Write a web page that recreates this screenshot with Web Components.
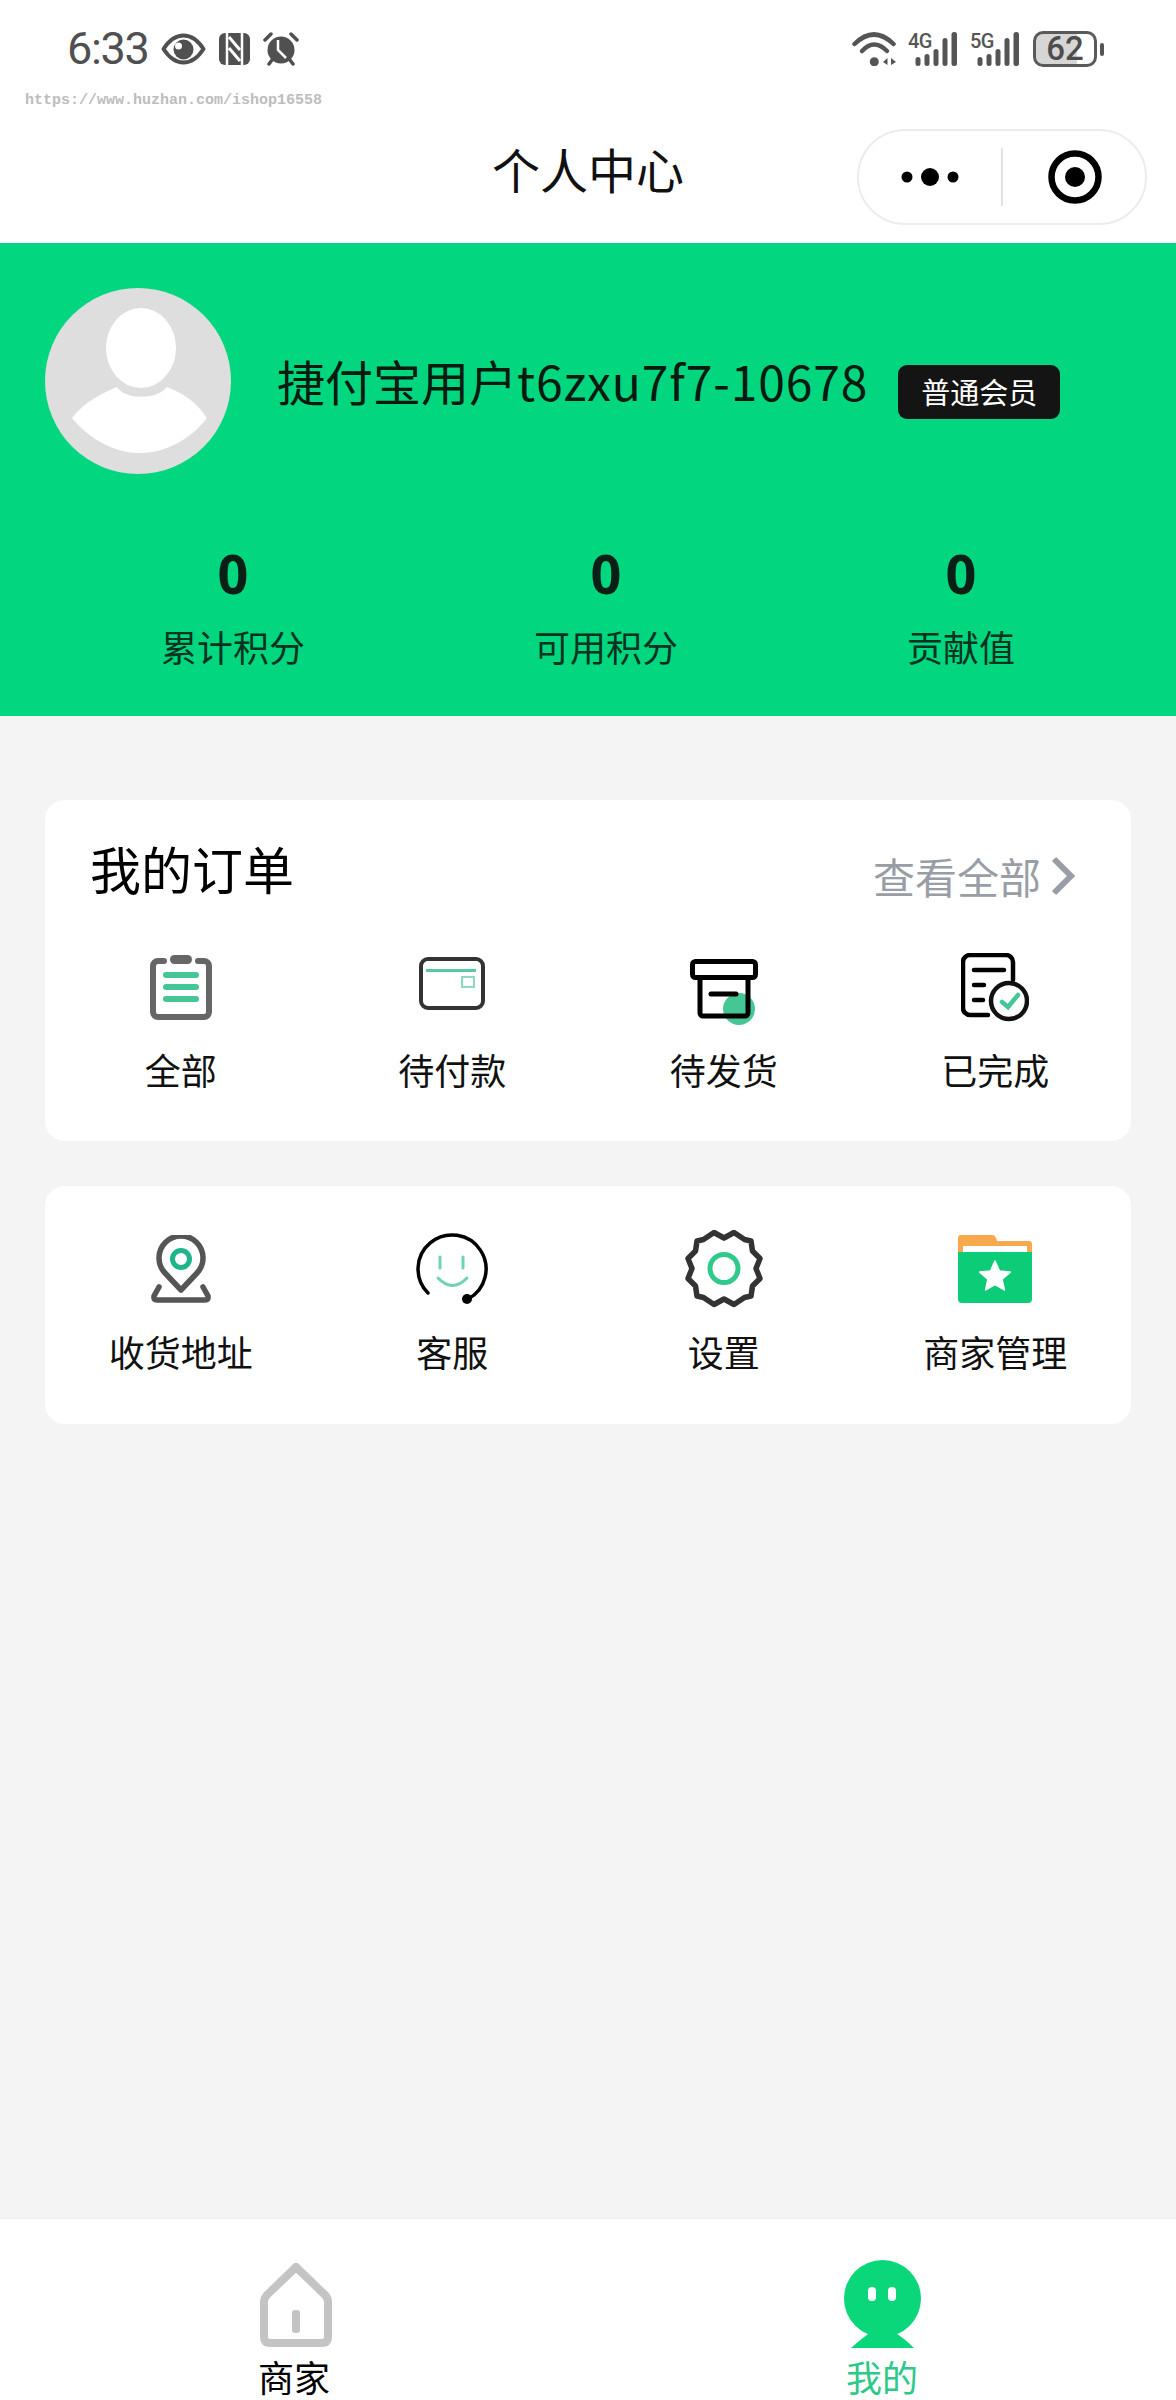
<!DOCTYPE html>
<html lang="zh-CN"><head><meta charset="utf-8"><title>个人中心</title>
<style>
html,body{margin:0;padding:0}
body{width:1176px;height:2400px;display:flex;flex-direction:column;background:#f4f4f4;font-family:"Noto Sans CJK SC","Noto Sans",sans-serif;color:#000}
x-main{flex:1}
</style></head><body>
<x-status></x-status>
<x-nav title="个人中心"></x-nav>
<x-profile name="捷付宝用户" uid="t6zxu7f7-10678" level="普通会员">
  <x-stat slot="stats" value="0" label="累计积分"></x-stat>
  <x-stat slot="stats" value="0" label="可用积分"></x-stat>
  <x-stat slot="stats" value="0" label="贡献值"></x-stat>
</x-profile>
<x-main>
  <x-card style="margin-top:84px;--top:0px;--bottom:52px;--gap:19px">
    <x-card-head slot="head" title="我的订单" more="查看全部"></x-card-head>
    <x-item label="全部"><svg style="margin-top:5px" width="62" height="65" viewBox="0 0 62 65" fill="none"><path d="M14 6H8a5 5 0 0 0-5 5V57a5 5 0 0 0 5 5H54a5 5 0 0 0 5-5V11a5 5 0 0 0-5-5H48" stroke="#666" stroke-width="6" stroke-linecap="round"/><rect x="20" y="0" width="22" height="9" rx="4.5" fill="#666"/><g fill="#45c695"><rect x="13" y="17" width="36" height="6" rx="3"/><rect x="13" y="29" width="36" height="6" rx="3"/><rect x="13" y="41" width="36" height="6" rx="3"/></g></svg></x-item>
    <x-item label="待付款"><svg style="margin-top:7px" width="66" height="53" viewBox="0 0 66 53" fill="none"><rect x="2" y="2" width="62" height="49" rx="7" stroke="#333" stroke-width="4"/><rect x="7" y="12" width="50" height="3" fill="#57c9a0"/><rect x="43" y="20" width="12" height="10" stroke="#8ddabd" stroke-width="2"/></svg></x-item>
    <x-item label="待发货"><svg style="margin-top:9px" width="68" height="66" viewBox="0 0 68 66" fill="none"><circle cx="49" cy="50" r="16" fill="#45c695"/><rect x="2.500" y="2.500" width="63" height="16" rx="3" stroke="#000" stroke-width="5"/><path d="M10 19V54a3 3 0 0 0 3 3H55a3 3 0 0 0 3-3V19" stroke="#000" stroke-width="5"/><path d="M21 35H46" stroke="#000" stroke-width="5" stroke-linecap="round"/></svg></x-item>
    <x-item label="已完成"><svg style="margin-top:3px" width="68" height="69" viewBox="0 0 68 69" fill="none"><path d="M27 62H9a7 7 0 0 1-7-7V9a7 7 0 0 1 7-7H45a7 7 0 0 1 7 7V27" stroke="#000" stroke-width="4.500" stroke-linecap="round"/><path d="M13 17H43M13 32H23M13 47H22" stroke="#000" stroke-width="4.500" stroke-linecap="round"/><circle cx="48" cy="48" r="18" stroke="#111" stroke-width="4.500"/><path d="M41 49L47 54L57 42" stroke="#45c695" stroke-width="4.500" stroke-linecap="round"/></svg></x-item>
  </x-card>
  <x-card style="margin-top:45px;--top:43px;--bottom:53px;--gap:22px">
    <x-item label="收货地址"><svg style="margin-top:6px" width="62" height="68" viewBox="0 0 62 68" fill="none"><path d="M31 55L15 38A22 22 0 1 1 47 38Z" stroke="#555" stroke-width="5.500" stroke-linejoin="round"/><circle cx="31" cy="24" r="8.500" stroke="#1eb58c" stroke-width="5"/><path d="M9 52L4 61Q3 65 7 65H55Q59 65 58 61L53 52" stroke="#555" stroke-width="5.500" stroke-linecap="round"/></svg></x-item>
    <x-item label="客服"><svg style="margin-top:4px" width="72" height="71" viewBox="0 0 72 71" fill="none"><path d="M12 60A34 34 0 1 1 52 66" stroke="#000" stroke-width="3.500" stroke-linecap="round"/><circle cx="51" cy="66" r="5" fill="#000"/><path d="M24 24V35M47 24V35" stroke="#6fd3ae" stroke-width="3" stroke-linecap="round"/><path d="M22 45Q36.500 60 51 45" stroke="#6fd3ae" stroke-width="3" stroke-linecap="round"/></svg></x-item>
    <x-item label="设置"><svg style="margin-top:1px" width="78" height="78" viewBox="10.500 9 78 78" fill="none"><path d="M49.500 17L59.500 11.500L70 18.500L76.500 20L78 30L85.500 37.500L81.500 47.500L85.500 57.500L78 65L76.500 75L70 76.500L59.500 83.500L49.500 78L39.500 83.500L29 76.500L22.500 75L21 65L13.500 57.500L17.500 47.500L13.500 37.500L21 30L22.500 20L29 18.500L39.500 11.500Z" stroke="#333" stroke-width="5.500" stroke-linejoin="round"/><circle cx="49.500" cy="47.500" r="14" stroke="#2fca8a" stroke-width="5"/></svg></x-item>
    <x-item label="商家管理"><svg style="margin-top:6px" width="74" height="68" viewBox="0 0 74 68"><path d="M0 3Q0 0 3 0H34Q37 0 38 3L39 6H71Q74 6 74 9V30H0Z" fill="#f9a84c"/><rect x="5" y="11" width="64" height="10" fill="#fff"/><path d="M0 17H74V64Q74 68 70 68H4Q0 68 0 64Z" fill="#0dcc78"/><polygon points="37,26 41.400,35.900 52.200,37.100 44.100,44.300 46.400,54.900 37,49.500 27.600,54.900 29.900,44.300 21.800,37.100 32.600,35.900" fill="#fff" stroke="#fff" stroke-width="1.500" stroke-linejoin="round"/></svg></x-item>
  </x-card>
</x-main>
<x-tabbar>
  <x-tab label="商家"><svg width="72" height="85" viewBox="0 0 72 85" fill="none" style="margin-left:4px"><path d="M36 5L65 33Q68 36 68 40V75Q68 81 62 81H10Q4 81 4 75V40Q4 36 7 33Z" stroke="#c4c4c4" stroke-width="8" stroke-linejoin="round"/><rect x="32" y="48" width="8" height="23" rx="3" fill="#c4c4c4"/></svg></x-tab>
  <x-tab label="我的" active><svg width="77" height="88" viewBox="0 0 77 88"><circle cx="38.500" cy="38.500" r="38.500" fill="#0ad67a"/><path d="M7 88Q18 78 27 72H50Q60 78 70 88Z" fill="#0ad67a"/><rect x="24" y="27" width="8" height="14" rx="4" fill="#fff"/><rect x="44" y="27" width="8" height="14" rx="4" fill="#fff"/></svg></x-tab>
</x-tabbar>
<script>
function def(name,css,html){
  customElements.define(name,class extends HTMLElement{
    constructor(){super();this.attachShadow({mode:'open'})}
    connectedCallback(){
      const a=k=>this.getAttribute(k)||'';
      this.shadowRoot.innerHTML='<style>'+css+'</style>'+html(a,this);
    }
  });
}
const bars='<rect x="7.500" y="25" width="5" height="9" rx="2.500"/><rect x="16.500" y="22" width="5" height="12" rx="2.500"/><rect x="25.500" y="17" width="5" height="17" rx="2.500"/><rect x="34.500" y="6" width="5" height="28" rx="2.500"/><rect x="43.500" y="0" width="5.500" height="34" rx="2.500"/>';
function net(t){return '<span class="net"><svg width="50" height="35" viewBox="0 0 50 35" fill="#555">'+bars+'</svg><b>'+t+'</b></span>'}
def('x-status',`
:host{display:block;background:#fff;height:113px;box-sizing:border-box;padding-top:31px;color:#505050}
.row{display:flex;justify-content:space-between;align-items:center;height:36px;padding:0 72px 0 67px}
.l,.r{display:flex;align-items:center}
.time{font:400 45px/36px Roboto,sans-serif;width:80px;letter-spacing:-1.300px;margin-right:14px;white-space:nowrap}
.l svg+svg{margin-left:13px}
.net{position:relative;display:block;width:50px;height:35px;margin-left:12px}
.net svg{display:block}
.net b{position:absolute;left:0;top:0;font:500 20px/18px Roboto,sans-serif;letter-spacing:-.5px;color:#555}
.bat{box-sizing:border-box;width:64px;height:36px;margin-left:13px;border:3px solid #5a5a5a;border-radius:10px;background:linear-gradient(90deg,#d6d6d6 70%,#fff 70%);font:500 33px/30px Roboto,sans-serif;text-align:center;color:#4d4d4d}
.nub{width:4px;height:13px;border-radius:2px;background:#555;margin-left:3px}
.mark{margin:26px 0 0 25px;font:700 15px/16px "Liberation Mono",monospace;color:#bdbdbd;white-space:nowrap}
`,()=>`<div class="row"><div class="l"><span class="time">6:33</span>
<svg width="45" height="32" viewBox="0 0 45 32"><path d="M2.500 16C9 6 15 2.500 22.500 2.500S36 6 42.500 16C36 26 30 29.500 22.500 29.500S9 26 2.500 16Z" fill="none" stroke="#505050" stroke-width="4" stroke-linejoin="round"/><circle cx="22.500" cy="16.500" r="10" fill="#505050"/><circle cx="17.500" cy="13" r="3.500" fill="#fff"/></svg>
<svg width="31" height="32" viewBox="0 0 31 32"><rect width="31" height="32" rx="6" fill="#505050"/><path d="M8 0V32M23 0V32" stroke="#fff" stroke-width="2.500"/><path d="M10 4L21 17M10 15L21 28" fill="none" stroke="#fff" stroke-width="3"/></svg>
<svg width="36" height="34" viewBox="0 0 36 34"><circle cx="18" cy="18" r="13.500" fill="#505050"/><path d="M2 8L8 2M34 8L28 2M6 32L9 28M30 32L27 28" stroke="#505050" stroke-width="3.500" stroke-linecap="round"/><path d="M15 8V18L23 26" fill="none" stroke="#fff" stroke-width="2.500"/></svg>
</div><div class="r">
<svg width="44" height="34" viewBox="0 0 44 34" fill="none" stroke="#555" stroke-linecap="round"><path d="M2.500 12Q22-7 41.500 12" stroke-width="4.500"/><path d="M10 19Q22 6 35 19" stroke-width="4.500"/><circle cx="22.300" cy="29.700" r="4.500" fill="#555" stroke="none"/><path d="M31 30L35.500 26V33ZM39 26L44 30L39 33Z" fill="#555" stroke="none"/></svg>
${net('4G')}${net('5G')}<div class="bat">62</div><div class="nub"></div></div></div>
<div class="mark">https://www.huzhan.com/ishop16558</div>`);
def('x-nav',`
:host{display:grid;grid-template-columns:1fr auto 1fr;align-items:center;height:130px;background:#fff}
.t{font-size:48px;line-height:60px;color:#111;padding-bottom:20px;white-space:nowrap}
x-capsule{justify-self:end;margin-right:29px;margin-bottom:3px}
`,a=>`<span></span><span class="t">${a('title')}</span><x-capsule></x-capsule>`);
def('x-capsule',`
:host{display:flex;align-items:center;box-sizing:border-box;width:290px;height:96px;border:2px solid #ececec;border-radius:48px;background:#fff}
.a{width:142px;display:flex;justify-content:center}
.d{width:2px;height:58px;background:#e2e2e2}
.b{flex:1;display:flex;justify-content:center;padding-left:2px}
`,()=>`<div class="a"><svg width="60" height="20" viewBox="0 0 60 20"><circle cx="7" cy="10" r="5.500"/><circle cx="30" cy="10" r="9"/><circle cx="53" cy="10" r="5.500"/></svg></div><div class="d"></div><div class="b"><svg width="54" height="54" viewBox="0 0 54 54"><circle cx="27" cy="27" r="23.500" fill="none" stroke="#000" stroke-width="6.500"/><circle cx="27" cy="27" r="10"/></svg></div>`);
def('x-profile',`
:host{display:block;height:473px;box-sizing:border-box;padding-top:45px;background:#02d67e}
.top{display:flex;align-items:center;padding-left:45px;height:186px}
.av{display:block;flex:none}
.n{margin-left:46px;margin-bottom:3px;font-size:48px;line-height:60px;color:#061a10;white-space:nowrap}
.u{letter-spacing:.850px}
.bd{margin-left:30px;margin-top:21px;box-sizing:border-box;width:162px;height:54px;border-radius:9px;background:#141414;color:#fff;font-size:29px;line-height:52px;text-align:center;white-space:nowrap}
.s{display:flex;justify-content:space-between;padding:68px 161px 0}
`,a=>`<div class="top"><svg class="av" width="186" height="186" viewBox="0 0 186 186"><circle cx="93" cy="93" r="93" fill="#dedede"/><ellipse cx="96" cy="60" rx="35" ry="40" fill="#fff"/><path d="M27 130C40 113 58 105 72 99C80 112 112 112 122 99C140 106 152 115 162 130C145 152 120 165 95 165C70 165 45 152 27 130Z" fill="#fff"/></svg><div class="n">${a('name')}<span class="u">${a('uid')}</span></div><div class="bd">${a('level')}</div></div><div class="s"><slot name="stats"></slot></div>`);
def('x-stat',`
:host{display:flex;flex-direction:column;align-items:center}
.v{font:700 54px/62px "Noto Sans",sans-serif;color:#0a2016}
.l{font-size:36px;line-height:50px;color:#06331f;white-space:nowrap;margin-top:17px}
`,a=>`<div class="v">${a('value')}</div><div class="l">${a('label')}</div>`);
def('x-card',`
:host{display:block;margin-left:45px;width:1086px;background:#fff;border-radius:20px;padding-bottom:var(--bottom,51px);box-sizing:border-box}
.g{display:grid;grid-template-columns:repeat(4,1fr);padding-top:var(--top,0px)}
`,()=>`<slot name="head"></slot><div class="g"><slot></slot></div>`);
def('x-card-head',`
:host{display:flex;justify-content:space-between;align-items:flex-start;height:150px;padding:0 56px 0 45px}
.t{font-size:51px;line-height:60px;margin-top:38px;color:#000}
.m{display:flex;align-items:center;margin-top:51px;color:#999ea6;font-size:42px;line-height:50px}
svg{margin-left:10px}
`,a=>`<div class="t">${a('title')}</div><div class="m">${a('more')}<svg width="24" height="40" viewBox="0 0 24 40" fill="none"><path d="M3 3L20 20L3 37" stroke="#999ea6" stroke-width="6"/></svg></div>`);
def('x-item',`
:host{display:flex;flex-direction:column;align-items:center}
.i{height:80px;display:flex;align-items:flex-start;justify-content:center}
.l{margin-top:var(--gap,20px);font-size:36px;line-height:40px;color:#111;white-space:nowrap}
`,a=>`<div class="i"><slot></slot></div><div class="l">${a('label')}</div>`);
def('x-tabbar',`
:host{display:grid;grid-template-columns:1fr 1fr;height:182px;box-sizing:border-box;background:#fff;border-top:1px solid #eee;padding-top:40px}
`,()=>`<slot></slot>`);
def('x-tab',`
:host{display:flex;flex-direction:column;align-items:center}
.i{height:90px;display:flex;align-items:center;justify-content:center}
.l{font-size:36px;line-height:44px;color:#000;margin-top:5px;white-space:nowrap}
:host([active]) .l{color:#2dc98a}
`,a=>`<div class="i"><slot></slot></div><div class="l">${a('label')}</div>`);
customElements.define('x-main',class extends HTMLElement{constructor(){super();this.attachShadow({mode:'open'}).innerHTML='<style>:host{display:flow-root}</style><slot></slot>'}});
</script>
</body></html>
